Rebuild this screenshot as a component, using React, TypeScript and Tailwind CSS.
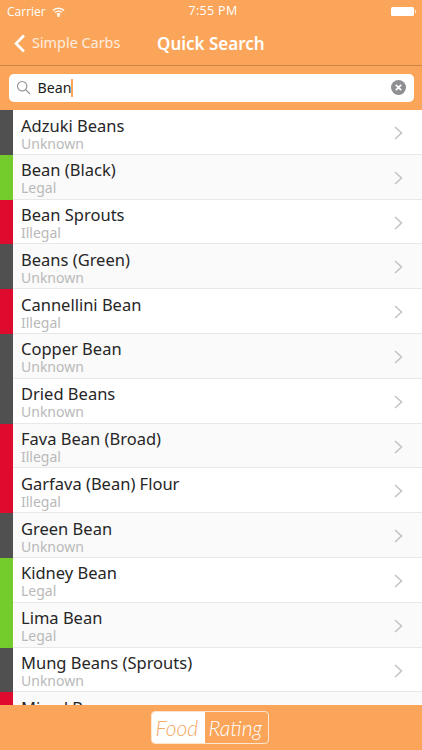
const foods = [
  { name: 'Adzuki Beans', status: 'Unknown' },
  { name: 'Bean (Black)', status: 'Legal' },
  { name: 'Bean Sprouts', status: 'Illegal' },
  { name: 'Beans (Green)', status: 'Unknown' },
  { name: 'Cannellini Bean', status: 'Illegal' },
  { name: 'Copper Bean', status: 'Unknown' },
  { name: 'Dried Beans', status: 'Unknown' },
  { name: 'Fava Bean (Broad)', status: 'Illegal' },
  { name: 'Garfava (Bean) Flour', status: 'Illegal' },
  { name: 'Green Bean', status: 'Unknown' },
  { name: 'Kidney Bean', status: 'Legal' },
  { name: 'Lima Bean', status: 'Legal' },
  { name: 'Mung Beans (Sprouts)', status: 'Unknown' },
  { name: 'Mixed Beans', status: 'Illegal' },
];

function FoodRow({ name, status, index }: { name: string; status: string; index: number }) {
  return (
    <div className={`flex h-[44.8px] shrink-0 border-b border-[#e8e8e8] ${index % 2 === 0 ? 'bg-white' : 'bg-[#fafafa]'}`}>
      <div
        className={`w-[13px] shrink-0 -mb-px ${
          status === 'Legal' ? 'bg-[#74cc2c]' : status === 'Illegal' ? 'bg-[#de0b2f]' : 'bg-[#505050]'
        }`}
      />
      <div className="flex-1 pl-2 pt-[4.5px]">
        <p className="text-[16.5px] leading-[21px] text-[#262626]">{name}</p>
        <p className="text-[14px] leading-[16px] text-[#b9b9b9]">{status}</p>
      </div>
      <svg className="mr-[19px] mt-[16px] h-[14px] w-[9px]" viewBox="0 0 9 14" fill="none" stroke="#c4c4c8" strokeWidth="1.6">
        <path d="M1 1l6.5 6L1 13" />
      </svg>
    </div>
  );
}

export default function App() {
  return (
    <div className="flex h-[750px] w-[422px] flex-col overflow-hidden bg-white font-['Noto_Sans',sans-serif]">
      <div className="shrink-0 bg-[#fba55a] text-white">
        <div className="flex h-[22px] items-center justify-between pl-[7px] pr-[6px] pt-px text-[12px]">
          <div className="flex w-[120px] items-center gap-[6px] font-['Open_Sans',sans-serif]">
            <span>Carrier</span>
            <svg className="h-[10px] w-[13px]" viewBox="0 0 14 10" fill="none" stroke="white" strokeWidth="1.5">
              <path d="M1 3.4a8.5 8.5 0 0 1 12 0" />
              <path d="M3.2 5.6a5.4 5.4 0 0 1 7.6 0" />
              <path d="M5.3 7.6a2.4 2.4 0 0 1 3.4 0" />
              <circle cx="7" cy="9" r=".6" fill="white" />
            </svg>
          </div>
          <span className="pl-[3px] font-['Open_Sans',sans-serif] text-[12.5px] font-medium tracking-wide">7:55 PM</span>
          <div className="flex w-[120px] items-center justify-end">
            <div className="h-[9px] w-[23px] rounded-[1.5px] bg-white" />
            <div className="ml-px h-[3px] w-[1px] bg-white/70" />
          </div>
        </div>
        <div className="relative flex h-[43.5px] items-center border-b border-[#c98448]">
          <div className="flex items-center pl-[13px]">
            <svg className="h-[19px] w-[13px]" viewBox="0 0 13 19" fill="none" stroke="white" strokeWidth="2.6">
              <path d="M11 1.5L3 9.5l8 8" />
            </svg>
            <span className="ml-[6px] text-[14.4px] text-white/80">Simple Carbs</span>
          </div>
          <span className="absolute left-[157px] text-[17px] font-semibold">Quick Search</span>
        </div>
        <div className="flex h-[44.5px] items-start px-[8.5px] pt-2">
          <div className="flex h-[28.5px] w-full items-center rounded-[5px] bg-white pl-[7px] pr-[8px]">
            <svg className="h-[15px] w-[15px]" viewBox="0 0 15 15" fill="none" stroke="#8e8e93" strokeWidth="1.1">
              <circle cx="6.2" cy="6.2" r="4.7" />
              <path d="M9.7 9.7l4.3 4.3" />
            </svg>
            <span className="ml-[7px] text-[14.2px] text-[#1c1c1c]">Bean</span>
            <div className="h-[18px] w-[1.5px] bg-[#fba55a]" />
            <svg className="ml-auto h-[15px] w-[15px]" viewBox="0 0 15 15">
              <circle cx="7.5" cy="7.5" r="7.5" fill="#8e8e93" />
              <path d="M4.8 4.8l5.4 5.4M10.2 4.8l-5.4 5.4" stroke="white" strokeWidth="1.7" />
            </svg>
          </div>
        </div>
      </div>

      <div className="flex min-h-0 flex-1 flex-col overflow-hidden">
        {foods.map((food, i) => (
          <FoodRow key={food.name} name={food.name} status={food.status} index={i} />
        ))}
      </div>

      <div className="flex h-[45px] shrink-0 items-center justify-center bg-[#fba55a]">
        <div className="-ml-[3px] flex h-[33px] w-[118px] overflow-hidden rounded-[4px] border border-[#fde6d0] font-['Lato',sans-serif] text-[21px] font-light italic leading-[31px]">
          <span className="w-[53px] bg-white pl-[4px] text-[#f5a964]">Food</span>
          <span className="flex-1 pl-[4px] text-white">Rating</span>
        </div>
      </div>
    </div>
  );
}
